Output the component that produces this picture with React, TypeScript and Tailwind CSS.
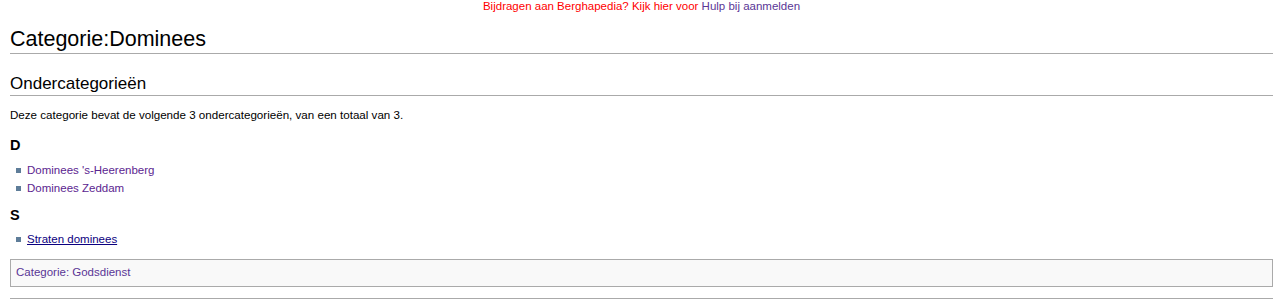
import React from 'react';

const subcats = [
  {
    letter: 'D',
    items: [
      { name: "Dominees 's-Heerenberg", visited: true },
      { name: 'Dominees Zeddam', visited: true },
    ],
  },
  {
    letter: 'S',
    items: [{ name: 'Straten dominees', visited: false }],
  },
];

export default function App() {
  return (
    <div className="bg-white text-black font-['Liberation_Sans',Arial,sans-serif] pl-[10px] pr-[7px]">
      {/* site notice */}
      <div className="text-center text-[11.5px] leading-[13px]">
        <span className="text-[#ff0000]">Bijdragen aan Berghapedia? Kijk hier voor </span>
        <a className="text-[#5a3696]">Hulp bij aanmelden</a>
      </div>

      <h1 className="mt-[13px] text-[21.5px] leading-[26px] border-b border-[#aaaaaa] pb-[1px]">
        Categorie:Dominees
      </h1>

      <h2 className="mt-[19px] text-[17px] leading-[21px] border-b border-[#aaaaaa] pb-[1px]">
        Ondercategorieën
      </h2>

      <p className="mt-[11px] text-[11.6px] leading-[16px]">
        Deze categorie bevat de volgende 3 ondercategorieën, van een totaal van 3.
      </p>

      {subcats.map((group, i) => (
        <div key={group.letter} className={i === 0 ? 'mt-[13px]' : 'mt-[9px]'}>
          <h3 className="text-[14.5px] font-bold leading-[18px]">{group.letter}</h3>
          <ul className={i === 0 ? 'mt-[7px]' : 'mt-[6px]'}>
            {group.items.map((item) => (
              <li key={item.name} className="flex items-center gap-[6px] pl-[6px] text-[11.5px] leading-[18px]">
                <span className="w-[5px] h-[5px] bg-[#5e7d99] shrink-0" />
                <a className={item.visited ? 'text-[#5b2590]' : 'text-[#0b0080] underline'}>{item.name}</a>
              </li>
            ))}
          </ul>
        </div>
      ))}

      <div className="mt-[11px] border border-[#aaaaaa] bg-[#f9f9f9] px-[5px] h-[28px] flex items-center text-[11.5px]">
        <a className="text-[#5a3696]">Categorie</a>
        <span className="text-[#5a3696]">:&nbsp;</span>
        <a className="text-[#5a3696]">Godsdienst</a>
      </div>

      <div className="mt-[11px] border-b border-[#aaaaaa]" />
    </div>
  );
}
